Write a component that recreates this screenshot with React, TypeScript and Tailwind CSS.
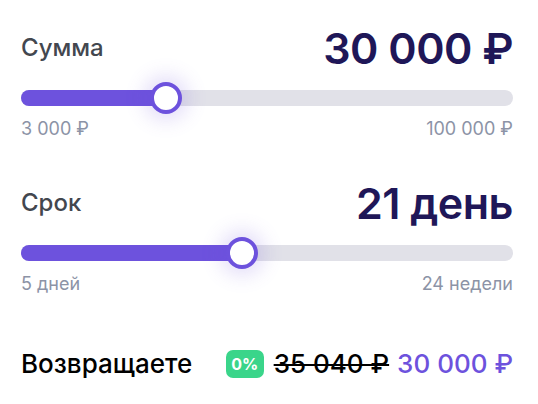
import React from "react";

function Slider({ percent }: { percent: number }) {
  return (
    <div className="relative h-4 w-full rounded-full bg-[#e1e1e8]">
      <div
        className="absolute left-0 top-0 h-4 rounded-full bg-[#6d52dd]"
        style={{ width: `${percent}%` }}
      />
      <div
        className="absolute top-1/2 h-8 w-8 -translate-x-1/2 -translate-y-1/2 rounded-full border-[4px] border-[#6d52dd] bg-white shadow-[0_0_20px_6px_rgba(109,82,221,0.2)]"
        style={{ left: `${percent}%` }}
      />
    </div>
  );
}

export default function App() {
  return (
    <div
      className="w-[538px] h-[404px] bg-white pl-[21px] pr-[25px] pt-[27px]"
      style={{ fontFamily: "Inter, 'Noto Sans', sans-serif" }}
    >
      <div className="flex items-center justify-between h-[42px]">
        <span className="text-[24px] font-medium text-[#43474f] leading-none">Сумма</span>
        <span className="text-[43px] font-semibold text-[#1f1758] leading-none tracking-[-0.5px]">30 000 ₽</span>
      </div>
      <div className="mt-[21px]">
        <Slider percent={29.5} />
      </div>
      <div className="mt-[14px] flex justify-between text-[18px] text-[#8c93a6] leading-none">
        <span>3 000 ₽</span>
        <span>100 000 ₽</span>
      </div>

      <div className="mt-[44px] flex items-center justify-between h-[42px]">
        <span className="text-[24px] font-medium text-[#43474f] leading-none">Срок</span>
        <span className="text-[43px] font-semibold text-[#1f1758] leading-none tracking-[-0.5px]">21 день</span>
      </div>
      <div className="mt-[21px]">
        <Slider percent={45} />
      </div>
      <div className="mt-[14px] flex justify-between text-[18px] text-[#8c93a6] leading-none">
        <span>5 дней</span>
        <span>24 недели</span>
      </div>

      <div className="mt-[57px] flex items-center h-[28px]">
        <span className="text-[26px] font-medium text-black leading-none">Возвращаете</span>
        <div className="ml-auto flex items-center">
          <span className="flex h-[28px] w-[38px] items-center justify-center rounded-[7px] bg-[#3ad58a] text-[16px] font-bold text-white leading-none">
            0%
          </span>
          <span className="ml-[10px] text-[26px] font-medium text-black leading-none line-through decoration-[2px]">35 040 ₽</span>
          <span className="ml-[8px] text-[26px] font-medium text-[#6d52dd] leading-none">30 000 ₽</span>
        </div>
      </div>
    </div>
  );
}
